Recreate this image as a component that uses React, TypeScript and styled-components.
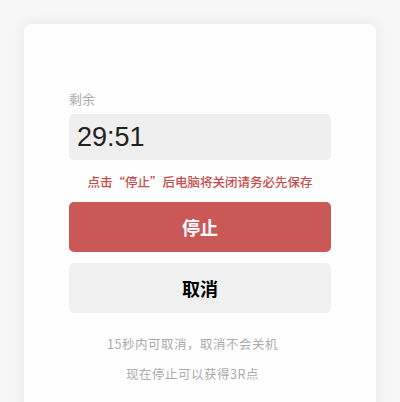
import styled, { createGlobalStyle } from 'styled-components'

const GlobalStyle = createGlobalStyle`
  body {
    margin: 0;
    background: #f6f6f6;
    font-family: "Liberation Sans", "Noto Sans CJK SC", sans-serif;
  }
`;

const Page = styled.div`
  height: 402px;
  overflow: hidden;
  padding: 24px 24px 0;
  box-sizing: border-box;
`;

const Card = styled.div`
  background: #fefefe;
  border-radius: 7px;
  box-shadow: 0 0 14px rgba(0, 0, 0, 0.06);
  padding: 66px 45px 40px;
  display: flex;
  flex-direction: column;
  min-height: 420px;
  box-sizing: border-box;
`;

const Label = styled.div`
  font-size: 13px;
  line-height: 18px;
  color: #ababab;
  font-family: "Noto Sans CJK SC", sans-serif;
  margin-bottom: 6px;
`;

const TimeBox = styled.div`
  height: 46px;
  border-radius: 5px;
  background: #efefef;
  display: flex;
  align-items: center;
  padding: 0 8px;
  font-family: "Liberation Sans", sans-serif;
  font-size: 27px;
  color: #222;
`;

const Warning = styled.div`
  margin: 10px 0 8px;
  text-align: center;
  font-family: "Noto Sans CJK SC", sans-serif;
  font-size: 12.5px;
  line-height: 24px;
  font-weight: 500;
  color: #c44e4b;
`;

const Button = styled.button<{ $danger?: boolean }>`
  height: 50px;
  border: none;
  border-radius: 5px;
  background: ${p => (p.$danger ? '#c95856' : '#f0f0f0')};
  color: ${p => (p.$danger ? '#fff' : '#000')};
  font-family: "Noto Sans CJK SC", sans-serif;
  font-size: 18px;
  font-weight: 700;
  cursor: pointer;
  & + & {
    margin-top: 11px;
  }
`;

const Hints = styled.div`
  margin-top: 22px;
  padding-right: 15px;
  display: flex;
  flex-direction: column;
  align-items: center;
  gap: 11.5px;
`;

const Hint = styled.div`
  font-family: "Noto Sans CJK SC", sans-serif;
  font-size: 12.5px;
  line-height: 18px;
  letter-spacing: 0.5px;
  color: #ababab;
`;

export default function App() {
  return (
    <Page>
      <GlobalStyle />
      <Card>
        <Label>剩余</Label>
        <TimeBox>29:51</TimeBox>
        <Warning>点击“停止”后电脑将关闭请务必先保存</Warning>
        <Button $danger>停止</Button>
        <Button>取消</Button>
        <Hints>
          <Hint>15秒内可取消，取消不会关机</Hint>
          <Hint>现在停止可以获得3R点</Hint>
        </Hints>
      </Card>
    </Page>
  )
}
